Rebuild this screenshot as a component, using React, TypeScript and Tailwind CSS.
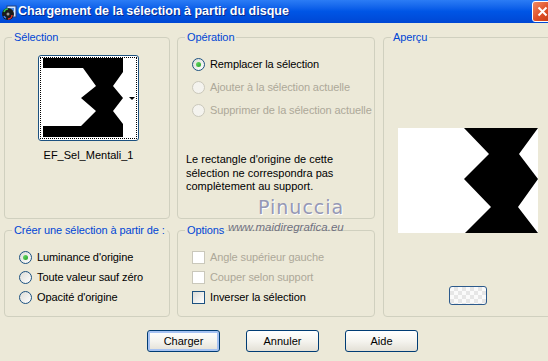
import type { ReactNode } from 'react';

const font = { fontFamily: '"Liberation Sans", Arial, sans-serif' };

function Radio({ checked = false, disabled = false }: { checked?: boolean; disabled?: boolean }) {
  return (
    <span
      className={`flex h-[13px] w-[13px] shrink-0 items-center justify-center rounded-full border ${
        disabled ? 'border-[#cac8bb] bg-[#f4f3ee]' : 'border-[#1c5180] bg-gradient-to-br from-[#dcdcd7] to-white'
      }`}
    >
      {checked && <span className="h-[5px] w-[5px] rounded-full bg-gradient-to-br from-[#6adc6a] to-[#21a121]" />}
    </span>
  );
}

function Check({ disabled = false }: { disabled?: boolean }) {
  return (
    <span
      className={`h-[13px] w-[13px] shrink-0 border ${
        disabled ? 'border-[#cac8bb] bg-white' : 'border-[#1c5180] bg-gradient-to-br from-[#dcdcd7] to-white'
      }`}
    />
  );
}

function Group({ label, className = '', children }: { label: string; className?: string; children: ReactNode }) {
  return (
    <fieldset className={`min-w-0 rounded-[4px] border border-[#d0d0bf] px-0 ${className}`}>
      <legend className="ml-[7px] whitespace-nowrap px-[2px] text-[11px] leading-[13px] tracking-[-0.1px] text-[#0046d5]">
        {label}
      </legend>
      {children}
    </fieldset>
  );
}

function Row({ children, disabled = false, h = 'h-[23px]' }: { children: ReactNode; disabled?: boolean; h?: string }) {
  return (
    <div
      className={`flex ${h} items-center gap-[5px] whitespace-nowrap pl-[14px] text-[11px] tracking-[-0.1px] ${
        disabled ? 'text-[#aca899]' : 'text-black'
      }`}
    >
      {children}
    </div>
  );
}

function Button({ label, primary = false }: { label: string; primary?: boolean }) {
  return (
    <button
      className={`h-[22px] w-[73px] rounded-[3px] border border-[#003c74] bg-gradient-to-b from-white via-[#f5f4ef] to-[#e3e0d6] text-[11px] text-black ${
        primary ? 'shadow-[inset_0_0_0_2px_#a6c2f2]' : ''
      }`}
    >
      {label}
    </button>
  );
}

export default function App() {
  return (
    <div className="relative h-[361px] w-[548px] overflow-hidden bg-[#ece9d8]" style={font}>
      <div className="w-[556px]">
        {/* title bar */}
        <div className="flex h-[23px] items-center bg-gradient-to-b from-[#2b7cf5] via-[#0055e5] to-[#0047d4] pl-[1px] pr-[3px]">
          <svg width="16" height="16" viewBox="0 0 16 16" className="shrink-0">
            <rect x="6" y="2" width="9" height="11" fill="#d6e8ff" stroke="#24407f" />
            <rect x="8" y="4" width="5" height="3" fill="#4d8ee8" />
            <circle cx="7" cy="10" r="6" fill="#1b1b1b" />
            <path d="M3 8 A4 4 0 0 1 7 5" stroke="#33c04a" strokeWidth="1.5" fill="none" />
            <path d="M7 15 A4 4 0 0 0 11 11" stroke="#e03030" strokeWidth="1.5" fill="none" />
            <path d="M3 12 A4 4 0 0 0 5 14" stroke="#3a7cf0" strokeWidth="1.5" fill="none" />
            <circle cx="7" cy="10" r="1.5" fill="#9a9a9a" />
          </svg>
          <span className="ml-[1px] text-[12.5px] font-bold text-white [text-shadow:1px_1px_0_#0a2a8a]">
            Chargement de la sélection à partir du disque
          </span>
          <span className="ml-auto flex h-[21px] w-[21px] items-center justify-center rounded-[3px] border border-white bg-gradient-to-br from-[#f08a63] via-[#e0512a] to-[#c3380e]">
            <svg width="11" height="11" viewBox="0 0 11 11">
              <path d="M1.5 1.5 L9.5 9.5 M9.5 1.5 L1.5 9.5" stroke="white" strokeWidth="2" />
            </svg>
          </span>
        </div>

        {/* groups */}
        <div className="grid grid-cols-[166px_198px_1fr] grid-rows-[188px_93px] gap-x-[7px] gap-y-[5px] pl-[4px] pt-[8px]">
          <Group label="Sélection">
            <div className="flex flex-col items-center pt-[11px] pl-[3px]">
              <div className="h-[86px] w-[101px] rounded-[3px] border border-[#1c5180] bg-white p-px">
                <div className="flex h-full border border-dotted border-black pl-[2px]">
                  <svg width="80" height="79" viewBox="0 0 80 79" className="shrink-0">
                    <rect x="0" y="0" width="80" height="10" fill="#000" />
                    <polygon
                      points="40,10 80,10 80,14 70,28 80,40 70,53 80,66 80,79 0,79 0,68 38,68 53,53 38,40 53,28"
                      fill="#000"
                    />
                  </svg>
                  <div className="flex flex-1 items-center justify-end pr-px">
                    <span className="h-0 w-0 border-x-[3px] border-t-[3px] border-x-transparent border-t-black" />
                  </div>
                </div>
              </div>
              <div className="mt-[8px] text-[11px] leading-[13px] text-black">EF_Sel_Mentali_1</div>
            </div>
          </Group>

          <Group label="Opération">
            <div className="pt-[9px]">
              <Row>
                <Radio checked />
                <span>Remplacer la sélection</span>
              </Row>
              <Row disabled>
                <Radio disabled />
                <span>Ajouter à la sélection actuelle</span>
              </Row>
              <Row disabled>
                <Radio disabled />
                <span>Supprimer de la sélection actuelle</span>
              </Row>
              <p className="mt-[31px] pl-[8px] text-[11px] leading-[13.5px] text-black">
                Le rectangle d'origine de cette
                <br />
                sélection ne correspondra pas
                <br />
                complètement au support.
              </p>
            </div>
          </Group>

          <Group label="Aperçu" className="row-span-2 ml-px w-[169px]">
            <div className="flex flex-col items-center pt-[84px]">
              <svg width="140" height="105" viewBox="0 0 140 105">
                <rect width="140" height="105" fill="#fff" />
                <polygon points="66,0 140,0 121,26 140,51 120,79 140,105 67,105 93,79 66,51 91,26" fill="#000" />
              </svg>
              <div className="mt-[53px] h-[19px] w-[38px] rounded-[3px] border border-[#2c5a8c] bg-[linear-gradient(45deg,#e6e6e6_25%,transparent_25%,transparent_75%,#e6e6e6_75%),linear-gradient(45deg,#e6e6e6_25%,#fafafa_25%,#fafafa_75%,#e6e6e6_75%)] bg-[length:8px_8px] bg-[position:0_0,4px_4px]" />
            </div>
          </Group>

          <Group label="Créer une sélection à partir de :">
            <div className="pt-[10px]">
              <Row h="h-[20px]">
                <Radio checked />
                <span>Luminance d'origine</span>
              </Row>
              <Row h="h-[20px]">
                <Radio />
                <span>Toute valeur sauf zéro</span>
              </Row>
              <Row h="h-[20px]">
                <Radio />
                <span>Opacité d'origine</span>
              </Row>
            </div>
          </Group>

          <Group label="Options">
            <div className="pt-[10px]">
              <Row disabled h="h-[20px]">
                <Check disabled />
                <span>Angle supérieur gauche</span>
              </Row>
              <Row disabled h="h-[20px]">
                <Check disabled />
                <span>Couper selon support</span>
              </Row>
              <Row h="h-[21px]">
                <Check />
                <span>Inverser la sélection</span>
              </Row>
            </div>
          </Group>
        </div>

        {/* buttons */}
        <div className="mt-[13px] flex gap-[26px] pl-[147px]">
          <Button label="Charger" primary />
          <Button label="Annuler" />
          <Button label="Aide" />
        </div>
      </div>

      {/* watermark */}
      <div
        className="absolute left-[258px] top-[196px] text-[19px] leading-[22px] tracking-[1px] text-[#9598b5] [text-shadow:1px_1px_0_#ffffff]"
        style={{ fontFamily: '"DejaVu Sans", sans-serif' }}
      >
        Pinuccia
      </div>
      <div className="absolute left-[228px] top-[220px] text-[11.5px] leading-[14px] italic text-[#6f7080]">
        www.maidiregrafica.eu
      </div>
    </div>
  );
}
